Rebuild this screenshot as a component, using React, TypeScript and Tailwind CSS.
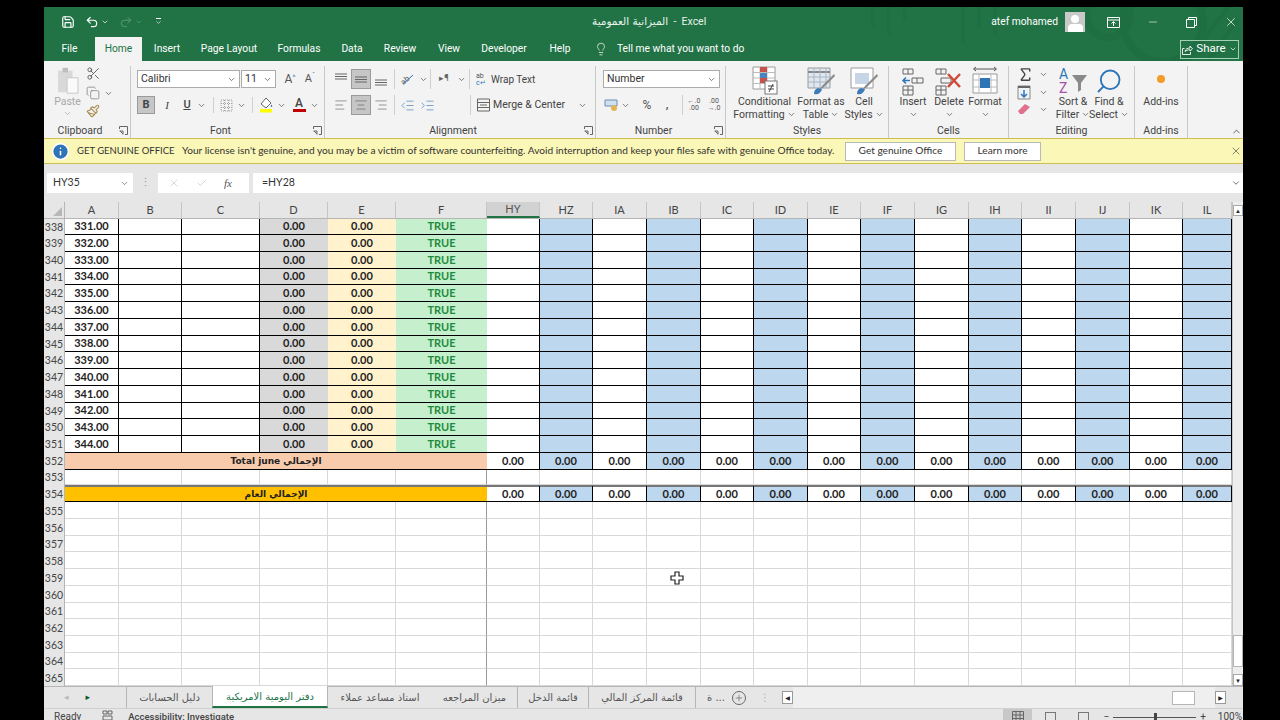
import { Save, Undo2, Redo2, Scissors, Copy, Paintbrush, ChevronDown, ChevronUp, Lightbulb, X, Minus, Check, Search, Sigma, Info, Plus, AlignLeft, AlignCenter, AlignRight, IndentDecrease, IndentIncrease } from "lucide-react";

const ui = "font-['Roboto',sans-serif]";
const sheet = "font-['Lato','Noto_Sans',sans-serif]";
const gridCols = "grid grid-cols-[21px_54px_63px_78px_68px_68px_91px_53px_53px_54px_54px_53px_54px_53px_54px_54px_53px_54px_54px_53px_49px]";

const letters = ["A", "B", "C", "D", "E", "F", "HY", "HZ", "IA", "IB", "IC", "ID", "IE", "IF", "IG", "IH", "II", "IJ", "IK", "IL"];
const rightCols = letters.slice(6);

// rows in the shot are 16.74px apart, snap to whole pixels so borders don't vanish
const rowH = (n: number) => {
  const i = n - 338;
  return Math.floor(16.74 * (i + 1)) - Math.floor(16.74 * i) === 17 ? "h-[17px]" : "h-[16px]";
};

const Chev = ({ className = "" }: { className?: string }) => (
  <ChevronDown size={9} strokeWidth={2} className={"text-[#555] shrink-0 " + className} />
);

const Launcher = () => (
  <svg width="9" height="9" viewBox="0 0 9 9" className="shrink-0">
    <path d="M.5 3V.5h8v8H6M.5 5h3.5v3.5M1 5l3 3" fill="none" stroke="#666" strokeWidth="1" />
  </svg>
);

const Sep = ({ h = "h-[20px]" }: { h?: string }) => <div className={"w-px bg-[#d0d0d0] shrink-0 " + h} />;

const Group = ({ w, label, launcher, pad = "", children }: { w: string; label: string; launcher?: boolean; pad?: string; children: React.ReactNode }) => (
  <div className={w + " h-full flex flex-col border-r border-[#c9c9c9] shrink-0"}>
    <div className="flex-1 min-h-0 flex">{children}</div>
    <div className={"h-[15px] flex items-center justify-center relative text-[10.5px] text-[#444] " + pad}>
      {label}
      {launcher && (
        <span className="absolute right-[2px] top-[3px]">
          <Launcher />
        </span>
      )}
    </div>
  </div>
);

const BigBtn = ({ w, icon, lines, chev }: { w: string; icon: React.ReactNode; lines: string[]; chev?: boolean }) => (
  <div className={w + " flex flex-col items-center shrink-0 text-[10.5px] leading-[13px] text-[#444]"}>
    <div className="h-[29px] flex items-center justify-center">{icon}</div>
    {lines.map((l, i) => (
      <div key={l} className="flex items-center gap-[2px] whitespace-nowrap">
        {l}
        {chev && i === lines.length - 1 && <Chev />}
      </div>
    ))}
    {lines.length === 1 && chev === undefined && <Chev className="mt-[2px]" />}
  </div>
);

const ConditionalIcon = () => (
  <svg width="28" height="30" viewBox="0 0 28 30">
    <path d="M2 1h22v22H2z" fill="#fff" stroke="#9a9a9a" />
    <path d="M9 1v22M16 1v22M2 6.5h22M2 12h22M2 17.5h22" stroke="#bbb" />
    <path d="M9 1h7v5H9z" fill="#c8514a" />
    <path d="M9 7h7v5H9z" fill="#4a83bd" />
    <path d="M9 12h7v5H9z" fill="#c8514a" />
    <rect x="14" y="15" width="12" height="13" fill="#fff" stroke="#777" />
    <path d="M17 20h6M17 23h6M22 18l-4 8" stroke="#444" strokeWidth="1" fill="none" />
  </svg>
);

const TableIcon = () => (
  <svg width="30" height="30" viewBox="0 0 30 30">
    <path d="M2 2h22v20H2z" fill="#dfe7f0" stroke="#9a9a9a" />
    <path d="M2 6h22" stroke="#888" strokeWidth="2" />
    <path d="M8 2v20M14 2v20M20 2v20M2 11h22M2 16h22" stroke="#a9b4c0" />
    <path d="M28 8 16 20l-2 3 3-1L29 10z" fill="#8a8a8a" />
    <path d="M12 22c-3 1-4 3-4 6 4 1 7-1 8-5z" fill="#3d7cb8" />
  </svg>
);

const CellStyleIcon = () => (
  <svg width="30" height="30" viewBox="0 0 30 30">
    <path d="M2 2h22v20H2z" fill="#fff" stroke="#9a9a9a" />
    <path d="M6 7h14v11H6z" fill="#c7d6e6" />
    <path d="M28 8 16 20l-2 3 3-1L29 10z" fill="#8a8a8a" />
    <path d="M12 22c-3 1-4 3-4 6 4 1 7-1 8-5z" fill="#3d7cb8" />
  </svg>
);

const InsertIcon = () => (
  <svg width="26" height="30" viewBox="0 0 26 30">
    <g fill="none" stroke="#666">
      <path d="M3 3h10v5H3zM8 3v5M3 20h10v9H3zM8 20v9M3 24h10M12 12h11v5H12zM17 12v5" />
    </g>
    <path d="M10 14.5H3M6 11.5l-3 3 3 3" fill="none" stroke="#2e75b6" strokeWidth="1.5" />
  </svg>
);

const DeleteIcon = () => (
  <svg width="32" height="30" viewBox="0 0 32 30">
    <g fill="none" stroke="#666">
      <path d="M3 3h10v5H3zM8 3v5M3 20h10v9H3zM8 20v9M3 24h10M8 12h10v5H8z" />
    </g>
    <path d="M15 8 27 21M27 8 15 21" stroke="#d04a3a" strokeWidth="2.5" />
  </svg>
);

const FormatIcon = () => (
  <svg width="28" height="30" viewBox="0 0 28 30">
    <path d="M2 8h24v19H2z" fill="#fff" stroke="#9a9a9a" />
    <path d="M8 8v19M20 8v19M2 14h24M2 21h24" stroke="#bbb" />
    <path d="M9 12h10v10H9z" fill="#2e75b6" />
    <path d="M3 3h22M5 1 2.5 3 5 5M23 1l2.5 2L23 5" fill="none" stroke="#555" />
  </svg>
);

const SortIcon = () => (
  <svg width="30" height="30" viewBox="0 0 30 30">
    <path d="M14 9h15l-6 8v7l-3 2v-9z" fill="#8a8a8a" />
    <text x="1" y="13" fontSize="14" fill="#2e75b6" fontFamily="Roboto,sans-serif">A</text>
    <text x="1" y="27" fontSize="14" fill="#a54fa5" fontFamily="Roboto,sans-serif">Z</text>
  </svg>
);

const Mini = ({ children, className = "" }: { children: React.ReactNode; className?: string }) => (
  <div className={"flex items-center justify-center shrink-0 " + className}>{children}</div>
);

const AlignLines = ({ v }: { v: "top" | "mid" | "bot" }) => {
  const y = v === "top" ? 2 : v === "mid" ? 5 : 8;
  return (
    <svg width="14" height="14" viewBox="0 0 14 14">
      <path d={`M1 ${y}h12M1 ${y + 2.5}h12M1 ${y + 5}h12`} stroke="#666" strokeWidth="1" />
    </svg>
  );
};

const Ribbon = () => (
  <div className={ui + " h-[77px] bg-[#f3f3f3] flex pt-[5px] shrink-0 relative"}>
    <Group w="w-[87px]" label="Clipboard" launcher pad="pr-[14px]">
      <div className="w-[42px] flex flex-col items-center text-[10.5px] text-[#a8a8a8] pl-[5px]">
        <svg width="24" height="29" viewBox="0 0 26 32">
          <path d="M2 5h16v24H2z" fill="#d9d9d9" />
          <path d="M7 2h6v5H7z" fill="#bdbdbd" />
          <path d="M12 13h12v17H12z" fill="#fafafa" stroke="#c4c4c4" />
        </svg>
        <div className="leading-[13px]">Paste</div>
        <ChevronDown size={9} className="text-[#aaa] mt-[1px]" />
      </div>
      <div className="flex flex-col">
        <Scissors size={15} className="text-[#555]" strokeWidth={1.4} />
        <div className="flex items-center gap-[4px] mt-[5px]">
          <Copy size={14} className="text-[#777]" strokeWidth={1.2} />
          <Chev />
        </div>
        <Paintbrush size={14} className="text-[#a98b4e] mt-[4px]" strokeWidth={1.8} />
      </div>
    </Group>
    <Group w="w-[194px]" label="Font" launcher pad="pr-[14px]">
      <div className="pl-[6px] pt-[4px] flex flex-col gap-[8px] w-full">
        <div className="flex items-center">
          <div className="w-[103px] h-[18px] bg-white border border-[#ababab] flex items-center justify-between px-[3px] text-[10.5px] text-[#333]">
            Calibri <Chev />
          </div>
          <div className="w-[35px] h-[18px] ml-[1px] bg-white border border-[#ababab] flex items-center justify-between px-[3px] text-[10.5px] text-[#333]">
            11 <Chev />
          </div>
          <div className="ml-[4px] w-[20px] text-[12px] text-[#555] text-center">A<sup className="text-[7px] text-[#2e75b6]">^</sup></div>
          <div className="w-[20px] text-[11px] text-[#555] text-center">A<sup className="text-[7px] text-[#2e75b6]">ˇ</sup></div>
        </div>
        <div className="flex items-center text-[#444]">
          <div className="w-[18px] h-[18px] bg-[#c6c6c6] border border-[#9a9a9a] flex items-center justify-center text-[11px] font-bold">B</div>
          <div className="w-[22px] ml-[1px] text-center text-[11px] italic font-['Liberation_Serif',serif]">I</div>
          <div className="w-[18px] text-center text-[11px] font-medium underline">U</div>
          <Chev className="ml-[1px]" />
          <div className="w-[7px]" />
          <Sep h="h-[16px]" />
          <Mini className="w-[24px]">
            <svg width="13" height="13" viewBox="0 0 13 13">
              <path d="M1 1h11v11H1zM4.5 1v11M8.5 1v11M1 4.5h11M1 8.5h11" fill="none" stroke="#a0a0a0" strokeDasharray="1 1" />
            </svg>
          </Mini>
          <Chev className="ml-[-1px]" />
          <div className="w-[6px]" />
          <Sep h="h-[16px]" />
          <Mini className="w-[22px] ml-[2px]">
            <svg width="15" height="16" viewBox="0 0 15 16">
              <path d="M7 1 2 7l5 4 5-5z" fill="#fff" stroke="#666" />
              <path d="M12.5 7.5c1 1.5 1 2.5 0 2.5s-1-1 0-2.5z" fill="#2e75b6" />
              <rect x="1" y="12" width="12" height="3.5" fill="#ffff00" />
            </svg>
          </Mini>
          <Chev />
          <Mini className="w-[20px] ml-[3px]">
            <div className="flex flex-col items-center leading-[11px] text-[12px] font-medium text-[#444]">
              A<div className="w-[13px] h-[3px] bg-[#c00000]" />
            </div>
          </Mini>
          <Chev className="ml-[1px]" />
        </div>
      </div>
    </Group>
    <Group w="w-[271px]" label="Alignment" launcher pad="pr-[14px]">
      <div className="pl-[6px] pt-[4px] flex flex-col gap-[8px] w-full text-[#444]">
        <div className="flex items-center h-[18px]">
          <Mini className="w-[20px]"><AlignLines v="top" /></Mini>
          <Mini className="w-[20px] h-[20px] bg-[#c6c6c6] border border-[#9a9a9a]"><AlignLines v="mid" /></Mini>
          <Mini className="w-[20px]"><AlignLines v="bot" /></Mini>
          <div className="w-[3px]" />
          <Sep />
          <Mini className="w-[24px]">
            <svg width="14" height="14" viewBox="0 0 14 14">
              <text x="0" y="10" fontSize="8" fill="#666" transform="rotate(-40 6 7)" fontFamily="Roboto,sans-serif">ab</text>
              <path d="M3 12 13 3" stroke="#2e75b6" />
            </svg>
          </Mini>
          <Chev />
          <div className="w-[2px]" />
          <Sep />
          <div className="w-[26px] text-center text-[9px] text-[#666]">▸¶</div>
          <Chev />
          <div className="w-[3px]" />
          <Sep />
          <div className="flex items-center gap-[3px] ml-[6px] text-[10px]">
            <svg width="12" height="14" viewBox="0 0 12 14">
              <text x="0" y="6" fontSize="7" fill="#555" fontFamily="Roboto,sans-serif">ab</text>
              <text x="0" y="13" fontSize="7" fill="#2e75b6" fontFamily="Roboto,sans-serif">c↵</text>
            </svg>
            Wrap Text
          </div>
        </div>
        <div className="flex items-center h-[18px]">
          <Mini className="w-[20px]"><AlignLeft size={14} strokeWidth={1} className="text-[#555]" /></Mini>
          <Mini className="w-[20px] h-[20px] bg-[#c6c6c6] border border-[#9a9a9a]"><AlignCenter size={14} strokeWidth={1} className="text-[#555]" /></Mini>
          <Mini className="w-[20px]"><AlignRight size={14} strokeWidth={1} className="text-[#555]" /></Mini>
          <div className="w-[3px]" />
          <Sep />
          <Mini className="w-[20px] ml-[2px]"><IndentDecrease size={15} strokeWidth={1} className="text-[#2e75b6]" /></Mini>
          <Mini className="w-[20px]"><IndentIncrease size={15} strokeWidth={1} className="text-[#2e75b6]" /></Mini>
          <div className="w-[33px]" />
          <Sep />
          <div className="flex items-center gap-[3px] ml-[6px] text-[10.5px]">
            <svg width="13" height="14" viewBox="0 0 13 14">
              <path d="M.5 1h12v12H.5zM.5 4.5h12M.5 9.5h12M3 7h7" fill="none" stroke="#666" />
            </svg>
            Merge &amp; Center
            <Chev className="ml-[10px]" />
          </div>
        </div>
      </div>
    </Group>
    <Group w="w-[130px]" label="Number" launcher pad="pr-[14px]">
      <div className="pl-[7px] pt-[4px] flex flex-col gap-[8px] w-full text-[#555]">
        <div className="w-[117px] h-[18px] bg-white border border-[#ababab] flex items-center justify-between px-[3px] text-[10.5px] text-[#333]">
          Number <Chev />
        </div>
        <div className="flex items-center h-[18px]">
          <Mini className="w-[16px]">
            <svg width="15" height="13" viewBox="0 0 15 13">
              <path d="M1 1h12v6H1z" fill="#cfe0f0" stroke="#6a8fb5" />
              <circle cx="10" cy="9" r="3" fill="#e4b454" />
            </svg>
          </Mini>
          <Chev className="ml-[2px]" />
          <div className="w-[24px] ml-[5px] text-center text-[12px]">%</div>
          <div className="w-[16px] text-center text-[11px] font-bold">,</div>
          <div className="w-[7px]" />
          <Sep />
          <div className="w-[22px] text-center text-[7px] leading-[7px] text-[#555]">←.0<br />.00</div>
          <div className="w-[18px] text-center text-[7px] leading-[7px] text-[#555]">.00<br />→.0</div>
        </div>
      </div>
    </Group>
    <Group w="w-[163px]" label="Styles">
      <div className="flex w-full pl-[3px]">
        <BigBtn w="w-[71px]" icon={<ConditionalIcon />} lines={["Conditional", "Formatting"]} chev />
        <BigBtn w="w-[42px]" icon={<TableIcon />} lines={["Format as", "Table"]} chev />
        <BigBtn w="w-[44px]" icon={<CellStyleIcon />} lines={["Cell", "Styles"]} chev />
      </div>
    </Group>
    <Group w="w-[120px]" label="Cells">
      <div className="flex w-full pl-[6px]">
        <BigBtn w="w-[36px]" icon={<InsertIcon />} lines={["Insert"]} />
        <BigBtn w="w-[36px]" icon={<DeleteIcon />} lines={["Delete"]} />
        <BigBtn w="w-[36px]" icon={<FormatIcon />} lines={["Format"]} />
      </div>
    </Group>
    <Group w="w-[126px]" label="Editing">
      <div className="flex w-full pl-[8px]">
        <div className="w-[38px] flex flex-col gap-[2px]">
          <div className="flex items-center gap-[5px]">
            <Sigma size={17} strokeWidth={2} className="text-[#444]" />
            <Chev />
          </div>
          <div className="flex items-center gap-[5px]">
            <svg width="14" height="15" viewBox="0 0 14 15">
              <path d="M1 1h12v13H1z" fill="#eef3f8" stroke="#888" />
              <path d="M1 2h12" stroke="#666" strokeWidth="2" />
              <path d="M7 5v7M4 9l3 3 3-3" fill="none" stroke="#2e75b6" strokeWidth="1.5" />
            </svg>
            <Chev className="ml-[3px]" />
          </div>
          <div className="flex items-center gap-[5px]">
            <svg width="14" height="14" viewBox="0 0 14 14">
              <path d="M1 9 8 2l5 3-7 7H3z" fill="#e0708c" />
            </svg>
            <Chev className="ml-[3px]" />
          </div>
        </div>
        <BigBtn w="w-[36px]" icon={<SortIcon />} lines={["Sort &", "Filter"]} chev />
        <BigBtn w="w-[36px]" icon={<Search size={28} strokeWidth={1.6} className="text-[#2e75b6] -scale-x-100" />} lines={["Find &", "Select"]} chev />
      </div>
    </Group>
    <Group w="w-[53px]" label="Add-ins">
      <div className="flex w-full justify-center">
        <BigBtn w="w-[40px]" icon={<div className="w-[8px] h-[8px] rounded-full bg-[#f39c26] mt-[-4px]" />} lines={["Add-ins"]} chev={false} />
      </div>
    </Group>
    <ChevronUp size={11} className="absolute right-[1px] bottom-[1px] text-[#555]" />
  </div>
);

const tabs: [string, string][] = [
  ["File", "w-[51px]"],
  ["Home", "w-[47px]"],
  ["Insert", "w-[50px]"],
  ["Page Layout", "w-[74px]"],
  ["Formulas", "w-[66px]"],
  ["Data", "w-[40px]"],
  ["Review", "w-[56px]"],
  ["View", "w-[42px]"],
  ["Developer", "w-[68px]"],
  ["Help", "w-[44px]"],
];

const TopBars = () => (
  <div className={ui + " bg-[#217346] text-white relative shrink-0 overflow-hidden"}>
    <svg className="absolute right-0 top-0 pointer-events-none" width="400" height="54" viewBox="0 0 400 54">
      <g fill="none" stroke="#1b6a3e" strokeWidth="8" opacity="0.45">
        <circle cx="265" cy="8" r="22" />
        <circle cx="320" cy="15" r="40" />
        <path d="M30-2v22M46-2v30M62-2v16M120-2v38M136-2v24M152-2v30" strokeWidth="4" />
        <path d="M345 54l40-54M365 54l30-42" strokeWidth="4" />
      </g>
    </svg>
    <div className="relative h-[30px] flex items-center pl-[17px]">
      <Save size={14} strokeWidth={2} />
      <Undo2 size={14} strokeWidth={2} className="ml-[10px]" />
      <ChevronDown size={8} className="ml-[2px]" />
      <Redo2 size={14} strokeWidth={1.6} className="ml-[10px] text-[#5f9c7c]" />
      <ChevronDown size={8} className="ml-[2px] text-[#5f9c7c]" />
      <div className="ml-[12px] text-[9px] leading-[9px] flex flex-col items-center">
        <div className="w-[5px] h-px bg-white" />
        <ChevronDown size={7} />
      </div>
      <div className="absolute left-[548px] text-[10.5px] whitespace-nowrap font-['DejaVu_Sans',sans-serif] text-[#e8f2ec]">
        الميزانية العمومية<span className={ui + " text-[10.5px]"}> &nbsp;-&nbsp; Excel</span>
      </div>
      <div className="ml-auto flex items-center">
        <div className="text-[10.25px]">atef mohamed</div>
        <div className="w-[20px] h-[20px] ml-[7px] bg-[#c9c9c9] flex flex-col items-center justify-end overflow-hidden">
          <div className="w-[8px] h-[8px] rounded-full bg-white" />
          <div className="w-[15px] h-[8px] rounded-t-[4px] bg-white mt-[1px]" />
        </div>
        <svg width="13" height="11" viewBox="0 0 13 11" className="ml-[22px]">
          <path d="M.5.5h12v10H.5zM.5 3h12M6.5 9V5M4.5 6.5l2-2 2 2" fill="none" stroke="#fff" />
        </svg>
        <Minus size={12} strokeWidth={1.2} className="ml-[27px]" />
        <svg width="11" height="11" viewBox="0 0 11 11" className="ml-[27px]">
          <path d="M.5 2.5h8v8h-8zM2.5 2.5V.5h8v8h-2" fill="none" stroke="#fff" />
        </svg>
        <X size={14} strokeWidth={1.2} className="ml-[27px] mr-[5px]" />
      </div>
    </div>
    <div className="relative h-[24px] flex items-stretch text-[10.25px]">
      {tabs.map(([t, w]) => (
        <div key={t} className={w + " flex items-center justify-center " + (t === "Home" ? "bg-[#f3f3f3] text-[#217346]" : "")}>
          {t}
        </div>
      ))}
      <Lightbulb size={14} strokeWidth={1.2} className="ml-[12px] self-center" />
      <div className="ml-[9px] self-center whitespace-nowrap">Tell me what you want to do</div>
      <div className="ml-auto mr-[4px] self-center w-[59px] h-[19px] border border-[#a5d0b6] flex items-center justify-center gap-[3px] text-[11.5px]">
        <svg width="11" height="11" viewBox="0 0 11 11">
          <path d="M2.5 4.5H.5v6h8V8M3 7.5c.5-2.5 2.5-3.500 5-3.500V2l2.500 2.800L8 7V5.800C6 5.800 4.500 6.300 3 7.500z" fill="none" stroke="#fff" strokeWidth=".9" />
        </svg>
        Share
        <ChevronDown size={8} />
      </div>
    </div>
  </div>
);

const GenuineBar = () => (
  <div className={sheet + " h-[26px] bg-[#fbf7b6] border-y border-[#cdbd55] flex items-center pl-[7px] text-[10.15px] text-[#333] shrink-0"}>
    <Info size={19} strokeWidth={2} className="text-white fill-[#2f75b5] shrink-0" />
    <span className="ml-[7px] w-[105px] whitespace-nowrap text-[9.5px]">GET GENUINE OFFICE</span>
    <span className="whitespace-nowrap w-[663px]">
      Your license isn't genuine, and you may be a victim of software counterfeiting. Avoid interruption and keep your files safe with genuine Office today.
    </span>
    <div className="w-[111px] h-[19px] bg-white border border-[#b9b9b9] flex items-center justify-center">Get genuine Office</div>
    <div className="ml-[8px] w-[77px] h-[19px] bg-white border border-[#b9b9b9] flex items-center justify-center">Learn more</div>
    <X size={12} strokeWidth={1.3} className="ml-auto mr-[1px] text-[#444]" />
  </div>
);

const FormulaBar = () => (
  <div className={sheet + " h-[38px] bg-[#e6e6e6] flex items-start pt-[9px] text-[10.5px] text-[#333] shrink-0"}>
    <div className="ml-[3px] w-[86px] h-[20px] bg-white flex items-center justify-between pl-[6px] pr-[4px]">
      HY35 <ChevronDown size={9} className="text-[#666]" />
    </div>
    <div className="w-[25px] h-[20px] flex items-center justify-center text-[#999]">⋮</div>
    <div className="w-[91px] h-[20px] bg-white flex items-center pl-[10px] gap-[16px]">
      <X size={12} strokeWidth={1.2} className="text-[#bbb]" />
      <Check size={12} strokeWidth={1.2} className="text-[#bbb]" />
      <span className="italic font-['Liberation_Serif',serif] text-[11px] text-[#555]">fx</span>
    </div>
    <div className="ml-[4px] flex-1 h-[20px] bg-white flex items-center justify-between pl-[9px] pr-[2px]">
      =HY28 <ChevronDown size={10} className="text-[#555]" />
    </div>
  </div>
);

const ColHeader = () => (
  <div className={gridCols + " h-[17px] bg-[#e6e6e6] border-b border-[#b5b5b5] text-[11px] leading-[12px] text-[#444]"}>
    <div className="flex items-end justify-end pr-[2px] pb-[2px] border-r border-[#b5b5b5]">
      <div className="w-0 h-0 border-l-[9px] border-l-transparent border-b-[9px] border-b-[#b8b8b8]" />
    </div>
    {letters.map((l) => (
      <div key={l} className={"flex items-center justify-center border-r border-[#c4c4c4] " + (l === "HY" ? "bg-[#d2d2d2] border-b-2 border-b-[#217346] text-[#555]" : "")}>
        {l}
      </div>
    ))}
  </div>
);

const RowNum = ({ n }: { n: number }) => (
  <div className="bg-[#e6e6e6] border-r border-[#b5b5b5] flex items-center justify-center text-[10.5px] text-[#444] font-normal">{n}</div>
);

const blueCol = (i: number) => i % 2 === 1;

const DataRow = ({ n, i }: { n: number; i: number }) => (
  <div className={gridCols + " " + rowH(n) + " text-[11px] leading-[12px] font-bold text-[#222]"}>
    <RowNum n={n} />
    <div className="border-r border-b border-black flex items-center justify-center">{(331 + i).toFixed(2)}</div>
    <div className="border-r border-b border-black" />
    <div className="border-r border-b border-black" />
    <div className="border-b border-black bg-[#d9d9d9] flex items-center justify-center">0.00</div>
    <div className="border-b border-black bg-[#fff2cc] flex items-center justify-center">0.00</div>
    <div className="border-b border-black bg-[#c6efce] text-[#1e8a3c] flex items-center justify-center">TRUE</div>
    {rightCols.map((l, j) => (
      <div key={l} className={"border-b border-r border-black " + (blueCol(j) ? "bg-[#bdd7ee]" : "bg-white")} />
    ))}
  </div>
);

const TotalRow = ({ n, label, bg, top }: { n: number; label: string; bg: string; top: string }) => (
  <div className={gridCols + " " + rowH(n) + " text-[11px] leading-[12px] font-bold text-[#222]"}>
    <RowNum n={n} />
    <div dir="auto" className={"col-span-6 border-b border-black flex items-center justify-center font-['DejaVu_Sans',sans-serif] text-[9px] " + bg + " " + top}>
      {label}
    </div>
    {rightCols.map((l, j) => (
      <div key={l} className={"border-b border-r border-black flex items-center justify-center " + top + " " + (blueCol(j) ? "bg-[#bdd7ee]" : "bg-white")}>
        0.00
      </div>
    ))}
  </div>
);

const BlankRow = ({ n }: { n: number }) => (
  <div className={gridCols + " " + rowH(n) + " leading-[12px]"}>
    <RowNum n={n} />
    {letters.map((l) => (
      <div key={l} className={"border-b border-r border-[#d8d8d8] " + (l === "F" ? "border-r-[#9a9a9a]" : "")} />
    ))}
  </div>
);

const Sheet = () => {
  const dataRows = Array.from({ length: 14 }, (_, i) => 338 + i);
  const blankAfter = Array.from({ length: 11 }, (_, i) => 355 + i);
  return (
    <div className={sheet + " flex-1 min-h-0 flex bg-white overflow-hidden relative"}>
      <div className="w-[1188px] shrink-0 flex flex-col">
        <ColHeader />
        {dataRows.map((n, i) => (
          <DataRow key={n} n={n} i={i} />
        ))}
        <TotalRow n={352} label="Total june الإجمالي" bg="bg-[#f8cbad]" top="" />
        <BlankRow n={353} />
        <TotalRow n={354} label="الإجمالي العام" bg="bg-[#ffc000]" top="border-t-2 border-t-[#777]" />
        {blankAfter.map((n) => (
          <BlankRow key={n} n={n} />
        ))}
      </div>
      <div className="w-[11px] shrink-0 bg-[#ededed] flex flex-col border-l border-[#c4c4c4]">
        <div className="h-[17px] flex items-center justify-center">
          <div className="w-[10px] h-[11px] bg-white border border-[#aaa] flex items-center justify-center text-[6px] text-[#222]">▲</div>
        </div>
        <div className="mt-[416px] h-[32px] bg-white border border-[#b5b5b5]" />
        <div className="mt-auto h-[12px] bg-white border border-[#aaa] flex items-center justify-center text-[6px] text-[#222]">▼</div>
      </div>
      <svg className="absolute left-[626px] top-[369px]" width="14" height="14" viewBox="0 0 14 14">
        <path d="M5 1h4v4h4v4H9v4H5V9H1V5h4z" fill="#fff" stroke="#222" strokeWidth="1.2" />
      </svg>
    </div>
  );
};

const sheetTabs: [string, string][] = [
  ["دليل الحسابات", "w-[85px]"],
  ["دفتر اليومية الامريكية", "w-[116px]"],
  ["استاذ مساعد عملاء", "w-[104px]"],
  ["ميزان المراجعه", "w-[86px]"],
  ["قائمة الدخل", "w-[71px]"],
  ["قائمة المركز المالي", "w-[107px]"],
];

const SheetTabs = () => (
  <div className="h-[22px] bg-[#e6e6e6] flex items-stretch border-t border-[#b5b5b5] shrink-0 text-[10px] text-[#555] font-['DejaVu_Sans',sans-serif]">
    <div className="w-[83px] flex items-center pl-[20px] gap-[17px] text-[9px] border-r border-[#b5b5b5]">
      <span className="text-[#bbb]">◂</span>
      <span className="text-[#145a32]">▸</span>
    </div>
    {sheetTabs.map(([t, w], i) => (
      <div key={t} dir="rtl" className={w + " flex items-center justify-center whitespace-nowrap " + (i === 1 ? "bg-white text-[#217346] border-b-2 border-[#217346] border-x border-x-[#b5b5b5] -mt-px" : i === 0 || i === 2 ? "" : "border-r border-[#b5b5b5]")}>
        {t}
      </div>
    ))}
    <div className="flex items-center ml-[11px] text-[10px]">
      <span dir="ltr" className="w-[25px] whitespace-nowrap">ة ...</span>
      <div className="w-[14px] h-[14px] rounded-full border border-[#666] flex items-center justify-center">
        <Plus size={10} strokeWidth={1.4} />
      </div>
      <span className="text-[#aaa] ml-[14px]">⋮</span>
      <div className="w-[11px] h-[13px] ml-[12px] bg-white border border-[#999] flex items-center justify-center text-[6px] text-[#222]">◀</div>
    </div>
    <div className="flex-1 bg-[#efefef] flex items-center justify-end pr-[20px]">
      <div className="w-[23px] h-[14px] bg-white border border-[#b5b5b5]" />
    </div>
    <div className="w-[14px] flex items-center">
      <div className="w-[11px] h-[13px] bg-white border border-[#999] flex items-center justify-center text-[6px] text-[#222]">▶</div>
    </div>
    <div className="w-[14px]" />
  </div>
);

const StatusBar = () => (
  <div className={ui + " h-[12px] bg-[#e6e6e6] flex items-start overflow-hidden shrink-0 text-[10px] leading-[16px] text-[#444] border-t border-[#d0d0d0]"}>
    <span className="ml-[10px]">Ready</span>
    <svg width="11" height="11" viewBox="0 0 11 11" className="ml-[21px] mt-[1px]">
      <path d="M1 1h4v3H1zM6 1h4v3H6zM1 6h9v4H1z" fill="none" stroke="#666" />
    </svg>
    <span className="ml-[15px] whitespace-nowrap font-medium text-[9.5px]">Accessibility: Investigate</span>
    <div className="ml-auto flex items-start h-full">
      <div className="w-[29px] h-full bg-[#c8c8c8] flex justify-center pt-[2px]">
        <svg width="12" height="11" viewBox="0 0 12 11">
          <path d="M.5.5h11v10H.5zM4 .5v10M8 .5v10M.5 4h11M.5 7.5h11" fill="none" stroke="#666" />
        </svg>
      </div>
      <div className="w-[11px] h-[12px] ml-[13px] mt-[3px] border border-[#777]" />
      <div className="w-[11px] h-[12px] ml-[22px] mt-[3px] border border-[#777]" />
      <span className="ml-[14px]">−</span>
      <div className="w-[83px] h-px bg-[#555] ml-[4px] mt-[8px] relative">
        <div className="absolute left-[41px] -top-[4px] w-[3px] h-[9px] bg-[#444]" />
      </div>
      <span className="ml-[4px]">+</span>
      <span className="ml-[12px] mr-[1px]">100%</span>
    </div>
  </div>
);

export default function App() {
  return (
    <div className="w-[1280px] h-[720px] bg-black pt-[7px] pl-[44px] overflow-hidden">
      <div className="w-[1199px] h-[713px] flex flex-col bg-[#e6e6e6] overflow-hidden">
        <TopBars />
        <Ribbon />
        <GenuineBar />
        <FormulaBar />
        <Sheet />
        <SheetTabs />
        <StatusBar />
      </div>
    </div>
  );
}
